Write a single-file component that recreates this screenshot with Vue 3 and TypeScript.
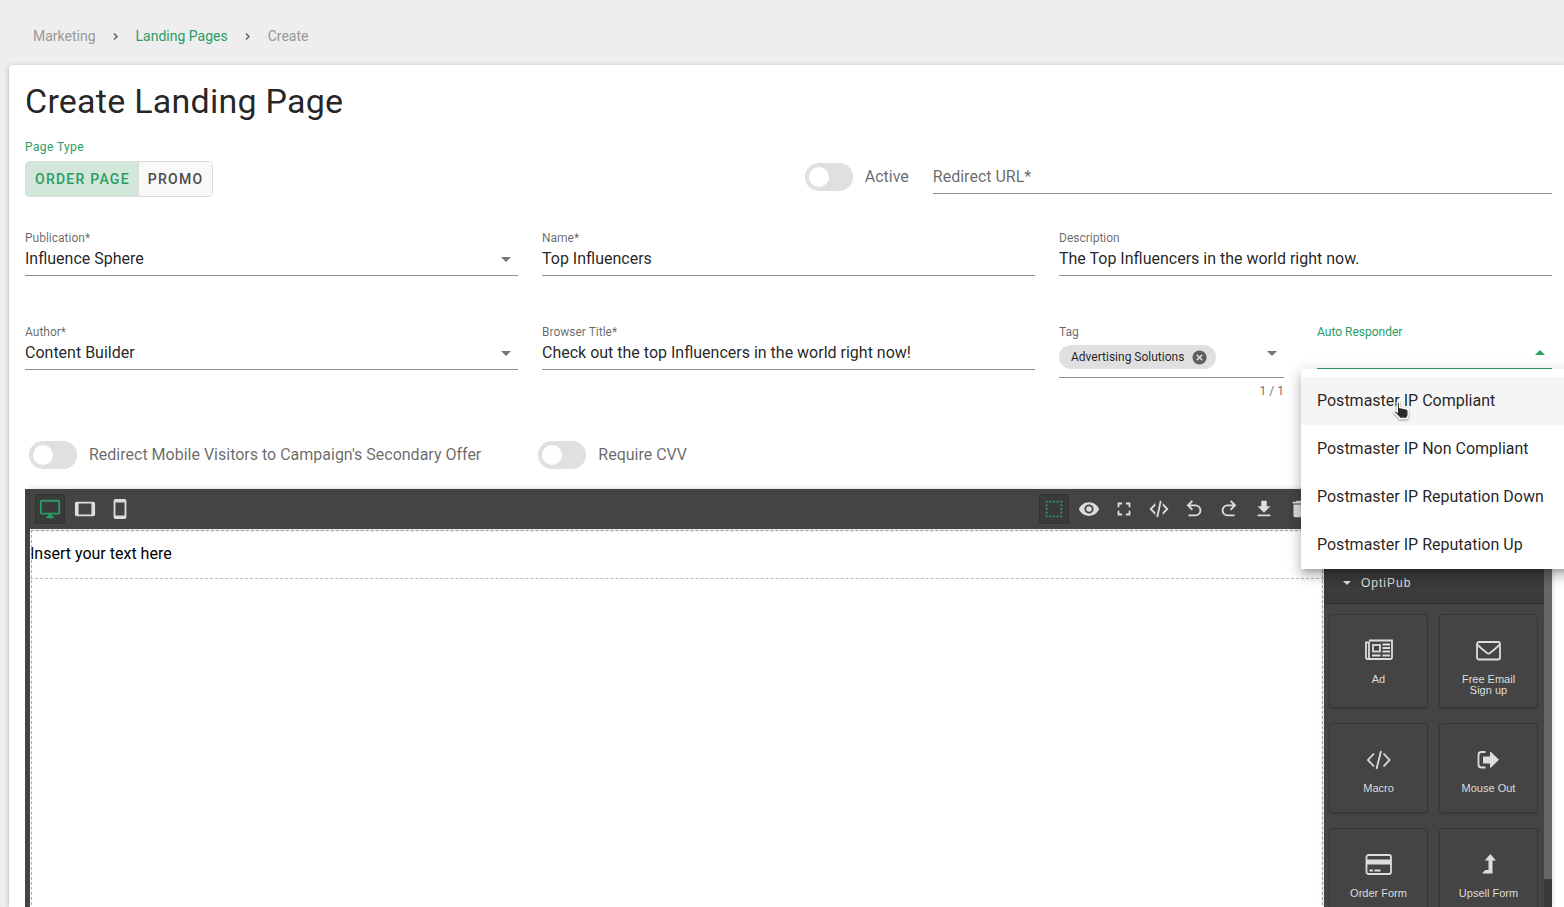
<script setup lang="ts">
import { ref } from 'vue'

interface Tool {
  name: string
  path: string
  active?: boolean
}

interface Block {
  label: string
  icon: string
}

const redirectUrl = ref('')
const name = ref('Top Influencers')
const description = ref('The Top Influencers in the world right now.')
const browserTitle = ref('Check out the top Influencers in the world right now!')
const publication = ref('Influence Sphere')
const author = ref('Content Builder')
const pageType = ref('Order Page')
const active = ref(false)
const redirectMobile = ref(false)
const requireCvv = ref(false)
const responder = ref('')
const hovered = ref(0)

const pageTypes = ['Order Page', 'Promo']
const responders = [
  'Postmaster IP Compliant',
  'Postmaster IP Non Compliant',
  'Postmaster IP Reputation Down',
  'Postmaster IP Reputation Up',
]

const devices: Tool[] = [
  { name: 'Desktop', active: true, path: 'M21,16H3V4H21M21,2H3C1.89,2 1,2.89 1,4V16A2,2 0 0,0 3,18H10V20H8V22H16V20H14V18H21A2,2 0 0,0 23,16V4C23,2.89 22.1,2 21,2Z' },
  { name: 'Tablet', path: 'M19,18H5V6H19M21,4H3C1.89,4 1,4.89 1,6V18A2,2 0 0,0 3,20H21A2,2 0 0,0 23,18V6C23,4.89 22.1,4 21,4Z' },
  { name: 'Mobile', path: 'M17,19H7V5H17M17,1H7C5.89,1 5,1.89 5,3V21A2,2 0 0,0 7,23H17A2,2 0 0,0 19,21V3C19,1.89 18.1,1 17,1Z' },
]

const tools: Tool[] = [
  { name: 'View components', active: true, path: 'M15,5H17V3H15M15,21H17V19H15M11,5H13V3H11M19,5H21V3H19M19,9H21V7H19M19,21H21V19H19M19,13H21V11H19M19,17H21V15H19M3,5H5V3H3M3,9H5V7H3M3,13H5V11H3M3,17H5V15H3M3,21H5V19H3M11,21H13V19H11M7,21H9V19H7M7,5H9V3H7V5Z' },
  { name: 'Preview', path: 'M12,9A3,3 0 0,0 9,12A3,3 0 0,0 12,15A3,3 0 0,0 15,12A3,3 0 0,0 12,9M12,17A5,5 0 0,1 7,12A5,5 0 0,1 12,7A5,5 0 0,1 17,12A5,5 0 0,1 12,17M12,4.5C7,4.5 2.73,7.61 1,12C2.73,16.39 7,19.5 12,19.5C17,19.5 21.27,16.39 23,12C21.27,7.61 17,4.5 12,4.5Z' },
  { name: 'Fullscreen', path: 'M5,5H10V7H7V10H5V5M14,5H19V10H17V7H14V5M17,14H19V19H14V17H17V14M10,17V19H5V14H7V17H10Z' },
  { name: 'View code', path: 'M12.89,3L14.85,3.4L11.11,21L9.15,20.6L12.89,3M19.59,12L16,8.41V5.58L22.42,12L16,18.41V15.58L19.59,12M1.58,12L8,5.58V8.41L4.41,12L8,15.58V18.41L1.58,12Z' },
  { name: 'Undo', path: 'M13.5,7A6.5,6.5 0 0,1 20,13.5A6.5,6.5 0 0,1 13.5,20H6V18H13.5C16,18 18,16 18,13.5C18,11 16,9 13.5,9H7.83L10.91,12.09L9.5,13.5L4,8L9.5,2.5L10.92,3.91L7.83,7H13.5Z' },
  { name: 'Redo', path: 'M10.5,7A6.5,6.5 0 0,0 4,13.5A6.5,6.5 0 0,0 10.5,20H18V18H10.5C8,18 6,16 6,13.5C6,11 8,9 10.5,9H16.17L13.09,12.09L14.5,13.5L20,8L14.5,2.5L13.08,3.91L16.17,7H10.5Z' },
  { name: 'Import', path: 'M5,20H19V18H5M19,9H15V3H9V9H5L12,16L19,9Z' },
  { name: 'Clear canvas', path: 'M19,4H15.5L14.5,3H9.5L8.5,4H5V6H19M6,19A2,2 0 0,0 8,21H16A2,2 0 0,0 18,19V7H6V19Z' },
]

const blocks: Block[] = [
  { label: 'Ad', icon: 'news' },
  { label: 'Free Email Sign up', icon: 'mail' },
  { label: 'Macro', icon: 'code' },
  { label: 'Mouse Out', icon: 'exit' },
  { label: 'Order Form', icon: 'card' },
  { label: 'Upsell Form', icon: 'up' },
]
</script>

<template>
  <div class="page">
    <nav class="crumbs" aria-label="Breadcrumb">
      <span>Marketing</span>
      <svg class="chevron" viewBox="0 0 16 16"><path d="M6 5.500l3 3L6 11.500" /></svg>
      <a href="#landing-pages">Landing Pages</a>
      <svg class="chevron" viewBox="0 0 16 16"><path d="M6 5.500l3 3L6 11.500" /></svg>
      <span>Create</span>
    </nav>

    <main class="card">
      <h1>Create Landing Page</h1>

      <div class="top-row">
        <div class="type-group" role="group" aria-labelledby="type-label">
          <div id="type-label" class="type-label">Page Type</div>
          <div class="segmented">
            <button
              v-for="t in pageTypes"
              :key="t"
              type="button"
              :class="{ selected: pageType === t }"
              :aria-pressed="pageType === t"
              @click="pageType = t"
            >{{ t }}</button>
          </div>
        </div>
        <div class="redirect">
          <label class="switch"><input v-model="active" type="checkbox" role="switch"><span>Active</span></label>
          <div class="field url">
            <input v-model="redirectUrl" type="text" aria-label="Redirect URL" placeholder="Redirect URL*">
          </div>
        </div>
      </div>

      <div class="grid">
        <div class="field">
          <label for="publication">Publication*</label>
          <div class="control">
            <select id="publication" v-model="publication"><option>Influence Sphere</option></select>
            <svg class="arrow" viewBox="0 0 24 24"><path d="M7,10L12,15L17,10H7Z" /></svg>
          </div>
        </div>
        <div class="field">
          <label for="name">Name*</label>
          <input id="name" v-model="name" type="text">
        </div>
        <div class="field">
          <label for="description">Description</label>
          <input id="description" v-model="description" type="text">
        </div>

        <div class="field">
          <label for="author">Author*</label>
          <div class="control">
            <select id="author" v-model="author"><option>Content Builder</option></select>
            <svg class="arrow" viewBox="0 0 24 24"><path d="M7,10L12,15L17,10H7Z" /></svg>
          </div>
        </div>
        <div class="field">
          <label for="browser-title">Browser Title*</label>
          <input id="browser-title" v-model="browserTitle" type="text">
        </div>
        <div class="pair">
          <div class="tag">
            <div class="field">
              <label for="tag">Tag</label>
              <div class="control tag-control">
                <span class="chip">Advertising Solutions
                  <button type="button" aria-label="Remove Advertising Solutions">
                    <svg viewBox="0 0 16 16"><circle cx="8" cy="8" r="7.5" /><path d="M5 5l6 6M11 5l-6 6" /></svg>
                  </button>
                </span>
                <input id="tag" type="text" class="tag-input">
                <svg class="arrow" viewBox="0 0 24 24"><path d="M7,10L12,15L17,10H7Z" /></svg>
              </div>
            </div>
            <div class="counter">1 / 1</div>
          </div>
          <div class="responder">
            <div class="field focused">
              <label for="responder">Auto Responder</label>
              <div class="control">
                <input
                  id="responder"
                  v-model="responder"
                  type="text"
                  role="combobox"
                  aria-expanded="true"
                  aria-controls="responder-menu"
                >
                <svg class="arrow" viewBox="0 0 24 24"><path d="M7,15L12,10L17,15H7Z" /></svg>
              </div>
            </div>
            <ul id="responder-menu" class="menu" role="listbox" aria-label="Auto Responder">
              <li
                v-for="(r, i) in responders"
                :key="r"
                role="option"
                :aria-selected="responder === r"
                :class="{ hovered: hovered === i }"
                @mouseenter="hovered = i"
                @click="responder = r"
              >{{ r }}</li>
            </ul>
            <svg class="cursor" viewBox="0 0 18 20">
              <path d="M4.200 2c0-1.300 2.400-1.300 2.400 0v4.500l6.400 1.300c1.500.3 2.200 1 2.200 2.300v3.700c0 1.200-.6 2-1 2.700v1H6.300v-1L1.300 11.500c-.9-1.200.5-2.300 1.500-1.500l1.400 1z" />
            </svg>
          </div>
        </div>
      </div>

      <div class="switches">
        <label class="switch"><input v-model="redirectMobile" type="checkbox" role="switch"><span>Redirect Mobile Visitors to Campaign's Secondary Offer</span></label>
        <label class="switch"><input v-model="requireCvv" type="checkbox" role="switch"><span>Require CVV</span></label>
      </div>

      <section class="editor" aria-label="Page editor">
        <div class="toolbar">
          <div class="tools">
            <button v-for="d in devices" :key="d.name" type="button" :class="{ on: d.active }" :aria-label="d.name">
              <svg viewBox="0 0 24 24"><path :d="d.path" /></svg>
            </button>
          </div>
          <div class="tools actions">
            <button v-for="t in tools" :key="t.name" type="button" :class="{ on: t.active }" :aria-label="t.name">
              <svg viewBox="0 0 24 24"><path :d="t.path" /></svg>
            </button>
          </div>
        </div>
        <div class="workspace">
          <div class="canvas">
            <div class="frame">
              <div class="text-block">Insert your text here</div>
            </div>
          </div>
          <aside class="panel">
            <div class="panel-body">
              <button type="button" class="category" aria-expanded="true">
                <svg viewBox="0 0 10 6"><path d="M1 1h8L5 5z" /></svg>OptiPub
              </button>
              <div class="blocks">
                <button v-for="b in blocks" :key="b.label" type="button" class="block">
                  <svg v-if="b.icon === 'news'" viewBox="0 0 30 28" class="line">
                    <path d="M5 4.500H28V21.500a1.500 1.500 0 0 1-1.500 1.500H3.500A1.500 1.500 0 0 1 2 21.500V6.500H5V21a1.700 1.700 0 0 1-1.500 2" />
                    <rect x="9" y="9" width="7" height="6.500" />
                    <path d="M18.500 8.500H26M18.500 12H26M18.500 15.500H26M8 19.500H16.500M18.500 19.500H26" />
                  </svg>
                  <svg v-else-if="b.icon === 'mail'" viewBox="0 0 30 28" class="line">
                    <rect x="3" y="6" width="23" height="17.500" rx="2" />
                    <path d="M3.500 8.500C6 12 10.500 14.500 12.500 16.700Q14.500 18.500 16.500 16.700C18.500 14.500 23 12 25.500 8.500" />
                  </svg>
                  <svg v-else-if="b.icon === 'code'" viewBox="0 0 30 28" class="line">
                    <path d="M10 8.500L4 15l6 6.500M19.500 8.500L25.500 15l-6 6.500M17 6L12.500 24" />
                  </svg>
                  <svg v-else-if="b.icon === 'exit'" viewBox="0 0 30 28">
                    <path class="stroked" d="M11.500 7H7.500a3 3 0 0 0-3 3V19.500a3 3 0 0 0 3 3H11.500" />
                    <path d="M9 11.500H16V7.500c0-.9.400-1.100 1-.5L25 14.700L17 22.500c-.6.600-1 .4-1-.5V18.500H9z" />
                  </svg>
                  <svg v-else-if="b.icon === 'card'" viewBox="0 0 30 28">
                    <rect class="stroked" x="2.500" y="5" width="24.500" height="19" rx="2" />
                    <path d="M2.500 9.500H27V14.500H2.500zM5.500 19.500H9V21.500H5.500zM10.500 19.500H16.500V21.500H10.500z" />
                  </svg>
                  <svg v-else viewBox="0 0 30 28">
                    <path d="M16.300 4L22 10.500H18.500V23.500H10c-1.500 0-2-.3-1-1.200L11.500 20H14.500V10.500H10.800z" />
                  </svg>
                  <span>{{ b.label }}</span>
                </button>
              </div>
            </div>
            <div class="scrolltrack"><div class="thumb"></div></div>
          </aside>
        </div>
      </section>
    </main>
  </div>
</template>

<style>
body {
  margin: 0;
  overflow: hidden;
}
</style>

<style scoped>
.page {
  --green: #2a9d63;
  --ink: rgba(0, 0, 0, 0.87);
  --muted: rgba(0, 0, 0, 0.6);
  display: flex;
  flex-direction: column;
  height: 100vh;
  overflow: hidden;
  background: #eee;
  color: var(--ink);
  font-family: Roboto, "Liberation Sans", sans-serif;
  font-size: 16px;
  line-height: 24px;
}
.page * { box-sizing: border-box; }
button, input, select {
  margin: 0;
  padding: 0;
  border: 0;
  background: none;
  font: inherit;
  color: inherit;
  outline: none;
}
button { cursor: pointer; }

.crumbs {
  display: flex;
  align-items: center;
  gap: 12px;
  padding: 28px 33px 21px;
  font-size: 14px;
  line-height: 16px;
  color: #979797;
}
.crumbs a { color: var(--green); text-decoration: none; }
.chevron { width: 16px; height: 16px; fill: none; stroke: #666; stroke-width: 1.5; }

.card {
  flex: 1;
  min-height: 0;
  display: flex;
  flex-direction: column;
  margin-left: 9px;
  padding: 16px 12px 0 16px;
  background: #fff;
  border-radius: 4px 0 0 0;
  box-shadow: 0 1px 5px rgba(0, 0, 0, 0.25);
}
h1 {
  margin: 0;
  font-size: 34px;
  line-height: 40px;
  font-weight: 400;
  letter-spacing: 0.25px;
}

.top-row {
  display: flex;
  justify-content: space-between;
  align-items: flex-end;
  margin-top: 16px;
}
.type-label {
  font-size: 12px;
  line-height: 20px;
  letter-spacing: 0.4px;
  color: var(--green);
}
.segmented {
  display: inline-flex;
  height: 36px;
  margin-top: 4px;
  border: 1px solid #dcdcdc;
  border-radius: 4px;
  overflow: hidden;
  vertical-align: top;
}
.segmented button {
  padding: 0 9px;
  background: #f8f8f8;
  color: #4b4b4b;
  font-size: 14px;
  font-weight: 500;
  letter-spacing: 1.25px;
  text-transform: uppercase;
}
.segmented button + button { margin-left: -1px; border-left: 1px solid #dcdcdc; }
.segmented .selected { background: #d2e6da; color: var(--green); }
.redirect {
  display: flex;
  align-items: flex-end;
  gap: 24px;
  width: calc(49% - 1px);
  margin-bottom: 3px;
}
.redirect .switch { margin-bottom: 3px; }
.url { flex: 1; }

.switch {
  display: flex;
  align-items: center;
  gap: 12px;
  height: 28px;
  color: var(--muted);
}
.switch input {
  appearance: none;
  width: 48px;
  height: 28px;
  padding: 4px;
  border-radius: 14px;
  background: #e0e0e0;
}
.switch input::before {
  content: "";
  display: block;
  width: 20px;
  height: 20px;
  border-radius: 50%;
  background: #fff;
}
.switch input:checked { background: var(--green); }
.switch input:checked::before { margin-left: 20px; }

.grid {
  display: grid;
  grid-template-columns: repeat(3, minmax(0, 1fr));
  gap: 48px 24px;
  align-items: start;
  margin-top: 33px;
}
.field {
  display: flex;
  flex-direction: column;
  padding-bottom: 3px;
  border-bottom: 1px solid #8f8f8f;
}
.field label {
  font-size: 12px;
  line-height: 16px;
  color: var(--muted);
}
.field input, .field select {
  width: 100%;
  min-width: 0;
  height: 26px;
  line-height: 26px;
  appearance: none;
}
.field input::placeholder { color: var(--muted); opacity: 1; }
.control { display: flex; align-items: center; }
.arrow { flex: none; width: 24px; height: 24px; fill: #757575; pointer-events: none; }

.pair { display: flex; align-items: flex-start; gap: 33px; }
.tag { flex: 225 1 0; min-width: 0; }
.responder { position: relative; flex: 235 1 0; min-width: 0; }
.tag-control { align-items: flex-start; height: 34px; }
.tag-control .arrow { margin-top: 1px; }
.field .tag-input { flex: 1; width: 0; }
.chip {
  display: flex;
  align-items: center;
  gap: 8px;
  height: 24px;
  margin-top: 5px;
  padding: 0 9px 0 12px;
  border-radius: 12px;
  background: #e0e0e0;
  font-size: 12px;
  white-space: nowrap;
}
.chip button { display: flex; }
.chip svg { width: 15px; height: 15px; fill: #5e5e5e; stroke: none; }
.chip path { stroke: #e0e0e0; stroke-width: 1.6; }
.counter {
  margin-top: 5px;
  font-size: 12px;
  line-height: 16px;
  text-align: right;
  color: var(--muted);
}
.focused { border-bottom: 2px solid var(--green); padding-bottom: 4px; }
.focused label { color: var(--green); }
.focused .arrow { fill: var(--green); }
.focused input { height: 24px; }

.menu {
  position: absolute;
  z-index: 2;
  top: 45px;
  left: -16px;
  margin: 0;
  padding: 8px 0 0;
  list-style: none;
  background: #fff;
  box-shadow: 0 5px 5px -3px rgba(0, 0, 0, 0.2), 0 8px 10px 1px rgba(0, 0, 0, 0.14), 0 3px 14px 2px rgba(0, 0, 0, 0.12);
}
.menu li {
  padding: 12px 32px 12px 16px;
  white-space: nowrap;
}
.menu .hovered { background: #f5f5f5; }
.cursor {
  position: absolute;
  z-index: 3;
  top: 77px;
  left: 76px;
  width: 18px;
  height: 20px;
  overflow: visible;
  fill: #2b2b2b;
  stroke: #fff;
  stroke-width: 1.4;
  filter: drop-shadow(0 1px 1px rgba(0, 0, 0, 0.4));
}

.switches {
  display: flex;
  gap: 57px;
  margin-top: 42px;
  padding-left: 4px;
}

.editor {
  flex: 1;
  min-height: 0;
  display: flex;
  flex-direction: column;
  margin-top: 20px;
  padding-left: 5px;
  background: #444;
}
.toolbar {
  z-index: 1;
  display: flex;
  justify-content: space-between;
  height: 40px;
  padding: 5px;
  background: #444;
  box-shadow: 0 0 5px rgba(0, 0, 0, 0.2);
}
.tools { display: flex; gap: 5px; }
.actions { width: 508px; }
.tools button { width: 30px; height: 30px; padding: 4px; border-radius: 2px; }
.tools svg { display: block; width: 22px; height: 22px; fill: #ddd; }
.tools .on { background: #3a3a3a; box-shadow: 0 0 2px rgba(0, 0, 0, 0.3) inset; }
.tools .on svg { fill: var(--green); }

.workspace { flex: 1; min-height: 0; display: flex; }
.canvas {
  flex: 1;
  display: flex;
  overflow: hidden;
  background: #fff;
  color: #000;
}
.frame { flex: 1; margin-bottom: -4px; outline: 1px dashed #aaa; outline-offset: -2px; }
.text-block { height: 50px; line-height: 50px; border-bottom: 1px dashed #bbb; }

.panel {
  display: flex;
  flex: none;
  width: 228px;
  overflow: hidden;
  background: #444;
  box-shadow: 0 0 5px rgba(0, 0, 0, 0.2);
  font-family: "Liberation Sans", Arial, sans-serif;
  color: #ddd;
}
.panel-body { flex: 1; padding-top: 33px; }
.category {
  display: flex;
  align-items: center;
  gap: 9px;
  width: 100%;
  height: 42px;
  padding-left: 18px;
  border-bottom: 1px solid #303030;
  background: #3b3b3b;
  font-size: 12px;
  letter-spacing: 1px;
}
.category svg { width: 10px; height: 6px; fill: #ddd; }
.blocks {
  display: grid;
  grid-template-columns: 1fr 1fr;
  gap: 15px 11px;
  padding: 10px 6px 10px 5px;
}
.block {
  display: flex;
  flex-direction: column;
  align-items: center;
  gap: 10px;
  min-height: 90px;
  padding: 21px 16px 11px;
  border: 1px solid #363636;
  border-radius: 3px;
  box-shadow: 0 1px 1px rgba(0, 0, 0, 0.15);
  font-size: 11px;
  line-height: 11px;
}
.block svg { flex: none; width: 30px; height: 28px; fill: #ddd; }
.block .line, .block .stroked { fill: none; stroke: #ddd; stroke-width: 1.8; }
.scrolltrack { width: 8px; background: #3a3a3a; }
.thumb { height: 350px; background: #666; }
</style>
